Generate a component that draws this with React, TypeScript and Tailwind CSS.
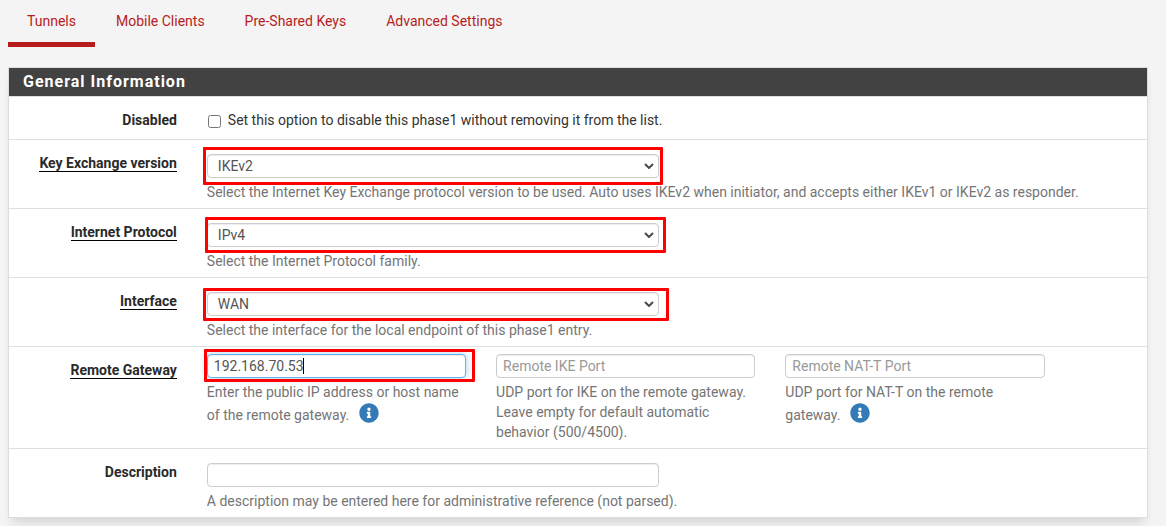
import { useState, type ReactNode } from "react";
import { FaInfoCircle } from "react-icons/fa";

const tabs = ["Tunnels", "Mobile Clients", "Pre-Shared Keys", "Advanced Settings"];

const fieldClass =
  "block h-6 w-full rounded border border-[#ccc] bg-white text-sm text-[#555] shadow-[inset_0_1px_1px_rgba(0,0,0,0.075)] outline-none placeholder:text-[#999]";

function Row({
  label,
  htmlFor,
  required = false,
  children,
}: {
  label: string;
  htmlFor: string;
  required?: boolean;
  children: ReactNode;
}) {
  return (
    <div className="border-b border-[#e0e0e0] last:border-b-0">
      <div className="-mr-[9px] -ml-2.5 grid grid-cols-12">
        <div className="col-span-2 px-[15px] pt-[13px] text-right font-bold text-[#2a2a2a]">
          <label
            htmlFor={htmlFor}
            className={required ? "inline-block h-[19px] border-b border-black whitespace-nowrap" : "inline-block"}
          >
            {label}
          </label>
        </div>
        {children}
      </div>
    </div>
  );
}

function Highlight({ className }: { className: string }) {
  return (
    <span
      aria-hidden="true"
      className={`pointer-events-none absolute rounded-[1px] border-3 border-[#fe0000] ${className}`}
    />
  );
}

function SelectRow({
  id,
  label,
  options,
  help,
  highlight,
}: {
  id: string;
  label: string;
  options: string[];
  help: string;
  highlight: string;
}) {
  return (
    <Row label={label} htmlFor={id} required>
      <div className="col-span-10 pt-3.5 pb-1.5">
        <div className="grid grid-cols-10">
          <div className="col-span-5 px-[15px]">
            <div className="relative">
              <select id={id} className={`${fieldClass} appearance-none pl-2.5 pr-6`}>
                {options.map((o) => (
                  <option key={o}>{o}</option>
                ))}
              </select>
              <svg
                aria-hidden="true"
                viewBox="0 0 10 6"
                className="pointer-events-none absolute top-[9px] right-[5px] h-1.5 w-2.5"
              >
                <path d="M1 1l4 4 4-4" fill="none" stroke="#4a4a4a" strokeWidth="2" />
              </svg>
              <Highlight className={highlight} />
            </div>
          </div>
        </div>
        <p className="mt-1 px-[15px]">{help}</p>
      </div>
    </Row>
  );
}

function InfoButton() {
  return (
    <button type="button" aria-label="More information" className="ml-1.5 inline-block pt-px align-[-3px] text-[#337ab7]">
      <FaInfoCircle className="block size-5" />
    </button>
  );
}

export default function App() {
  const [active, setActive] = useState(tabs[0]);
  const [gateway, setGateway] = useState("192.168.70.53");

  return (
    <div className="min-h-screen bg-[#f4f4f4] pr-[18px] pl-2 font-['Roboto',sans-serif] text-sm text-[#757575]">
      <nav className="flex gap-0.5">
        {tabs.map((t) => (
          <a
            key={t}
            href="#"
            aria-current={active === t ? "page" : undefined}
            onClick={() => setActive(t)}
            className={`border-b-5 px-[19px] pt-[11px] pb-[11px] text-[#b71c1c] ${
              active === t ? "border-[#b71c1c]" : "border-transparent"
            }`}
          >
            {t}
          </a>
        ))}
      </nav>

      <form className="mt-5 border border-[#ddd] bg-white shadow-[0_8px_10px_-4px_rgba(0,0,0,0.14)]">
        <h2 className="h-[29px] border-b border-[#ddd] bg-[#424242] px-3.5 text-base leading-7 font-bold tracking-[1px] text-white">
          General Information
        </h2>

        <Row label="Disabled" htmlFor="disabled">
          <div className="col-span-10 flex px-[15px] pt-[13px] pb-[9px] text-[#333]">
            <input
              id="disabled"
              type="checkbox"
              className="mt-[5px] mr-[7px] ml-px size-[13px] shrink-0"
            />
            <label htmlFor="disabled">
              Set this option to disable this phase1 without removing it from the list.
            </label>
          </div>
        </Row>

        <SelectRow
          id="iketype"
          label="Key Exchange version"
          options={["IKEv2", "IKEv1", "Auto"]}
          help="Select the Internet Key Exchange protocol version to be used. Auto uses IKEv2 when initiator, and accepts either IKEv1 or IKEv2 as responder."
          highlight="-inset-x-1 -inset-y-[7px]"
        />
        <SelectRow
          id="protocol"
          label="Internet Protocol"
          options={["IPv4", "IPv6", "Both (Dual Stack)"]}
          help="Select the Internet Protocol family."
          highlight="-inset-y-1.5 -left-0.5 -right-[7px]"
        />
        <SelectRow
          id="interface"
          label="Interface"
          options={["WAN", "LAN"]}
          help="Select the interface for the local endpoint of this phase1 entry."
          highlight="-top-1 -bottom-[5px] -left-1 -right-2.5"
        />

        <Row label="Remote Gateway" htmlFor="remotegw" required>
          <div className="col-span-3 px-[15px] pt-[7px] pb-1.5">
            <div className="relative">
              <input
                id="remotegw"
                value={gateway}
                onChange={(e) => setGateway(e.target.value)}
                className="block h-6 w-full rounded border border-[#66afe9] bg-white px-1.5 text-sm text-[#555] shadow-[inset_0_1px_1px_rgba(0,0,0,0.075),0_0_8px_rgba(102,175,233,0.6)] outline-none"
              />
              <span aria-hidden="true" className="absolute top-1 left-24 h-4 w-px bg-black" />
              <Highlight className="-top-[5px] -bottom-1 -left-[3px] -right-[9px]" />
            </div>
            <p className="mt-1">
              Enter the public IP address or host name of the remote gateway. <InfoButton />
            </p>
          </div>
          <div className="col-span-3 px-[15px] pt-[7px] pb-1.5">
            <input aria-label="Remote IKE Port" placeholder="Remote IKE Port" className={`${fieldClass} px-1.5`} />
            <p className="mt-1">
              UDP port for IKE on the remote gateway. Leave empty for default automatic behavior (500/4500).
            </p>
          </div>
          <div className="col-span-3 px-[15px] pt-[7px] pb-1.5">
            <input aria-label="Remote NAT-T Port" placeholder="Remote NAT-T Port" className={`${fieldClass} px-1.5`} />
            <p className="mt-1">
              UDP port for NAT-T on the remote gateway. <InfoButton />
            </p>
          </div>
        </Row>

        <Row label="Description" htmlFor="descr">
          <div className="col-span-10 pt-3.5 pb-1.5">
            <div className="grid grid-cols-10">
              <div className="col-span-5 px-[15px]">
                <input id="descr" className={`${fieldClass} px-1.5`} />
              </div>
            </div>
            <p className="mt-1 px-[15px]">
              A description may be entered here for administrative reference (not parsed).
            </p>
          </div>
        </Row>
      </form>
    </div>
  );
}
